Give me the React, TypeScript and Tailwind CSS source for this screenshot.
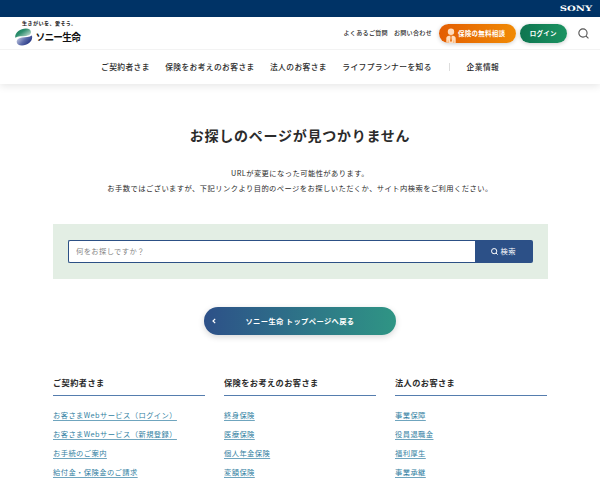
import type { ReactNode } from "react";

const topLinks = ["よくあるご質問", "お問い合わせ"];

const navItems = ["ご契約者さま", "保険をお考えのお客さま", "法人のお客さま", "ライフプランナーを知る"];

const columns = [
  {
    title: "ご契約者さま",
    links: [
      "お客さまWebサービス（ログイン）",
      "お客さまWebサービス（新規登録）",
      "お手続のご案内",
      "給付金・保険金のご請求",
    ],
  },
  {
    title: "保険をお考えのお客さま",
    links: ["終身保険", "医療保険", "個人年金保険", "変額保険"],
  },
  {
    title: "法人のお客さま",
    links: ["事業保障", "役員退職金", "福利厚生", "事業承継"],
  },
];

function SearchIcon({ className }: { className: string }) {
  return (
    <svg viewBox="0 0 12 12" fill="none" stroke="currentColor" className={className}>
      <circle cx="5.4" cy="5.4" r="4.5" />
      <path d="M8.6 8.6 11.4 11.4" />
    </svg>
  );
}

function Logo() {
  return (
    <a href="#" className="block w-[70px] pt-[2px] text-[#111]">
      <p className="ml-[7px] h-[8px] whitespace-nowrap text-[5.1px] font-bold leading-[8px] tracking-[0.39px]">
        生きがいを、愛そう。
      </p>
      <div className="flex items-center">
        <svg viewBox="0 0 18 18" className="mt-[1px] h-[18px] w-[18px] shrink-0">
          <defs>
            <linearGradient id="leaf" x1="0.1" y1="0" x2="0.95" y2="0.7">
              <stop offset="0" stopColor="#0c7a55" />
              <stop offset="0.45" stopColor="#2f8f6f" />
              <stop offset="1" stopColor="#bcd8cd" />
            </linearGradient>
            <linearGradient id="wave" x1="0" y1="0.3" x2="0.9" y2="0.8">
              <stop offset="0" stopColor="#c3cae2" />
              <stop offset="0.5" stopColor="#5d6caa" />
              <stop offset="1" stopColor="#1f3080" />
            </linearGradient>
          </defs>
          <path d="M0.3 9.8C-0.7 5 4.8 0.4 11 0.4c3.4 0 5.3 1.9 5 4.2-.3 2.1-2.3 3.1-5 3.4C7 8.4 3 7.9 0.3 9.8Z" fill="url(#leaf)" />
          <path d="M16.9 7.4c1.6 5-3.8 10.1-9.9 10.1-3.6 0-5.6-1.9-5.3-4.3.3-2.2 2.4-3.4 5.2-3.7 4-.4 7.5-.2 10-2.1Z" fill="url(#wave)" />
        </svg>
        <span className="ml-[2.5px] whitespace-nowrap text-[9.7px] font-bold leading-[16px] tracking-[-0.75px]">
          ソニー生命
        </span>
      </div>
    </a>
  );
}

function PersonIcon() {
  return (
    <svg viewBox="0 0 10 15" className="h-[15px] w-[10px] shrink-0 self-end">
      <circle cx="5" cy="3.8" r="3.2" fill="#ffdcbd" />
      <path d="M0.3 15v-4.4C0.3 8.6 1.6 7.8 3 7.8h4c1.4 0 2.7.8 2.7 2.8V15Z" fill="#ffdcbd" />
      <path d="M4.3 8h1.4L5.4 9.4l.5 3.6-.9 1-.9-1 .5-3.6Z" fill="#e66a05" />
      <path d="M2.2 12.4V15M7.8 12.4V15" stroke="#ec7905" strokeWidth="0.4" />
    </svg>
  );
}

function TextLink({ children }: { children: ReactNode }) {
  return (
    <a
      href="#"
      className="text-[#327fa2] underline decoration-[#327fa2]/70 decoration-[1px] underline-offset-[1.5px]"
    >
      {children}
    </a>
  );
}

export default function App() {
  return (
    <div
      lang="ja"
      className="h-[480px] w-[600px] overflow-hidden bg-white font-['Noto_Sans_CJK_JP',sans-serif] text-[7.3px] tracking-[0.36px] text-[#2b2b2b]"
    >
      <div className="flex h-[17px] items-center justify-end bg-[#003366] pr-[8px]">
        <span className="origin-right scale-x-[1.34] font-['DejaVu_Serif',serif] text-[7.5px] font-bold leading-none tracking-normal text-white">
          SONY
        </span>
      </div>

      <header className="h-[67px] bg-white shadow-[0_2px_8px_rgba(0,0,0,0.1)]">
        <div className="flex h-[33px] justify-between border-b border-[#f3f3f3] pl-[15px] pr-[11px]">
          <Logo />
          <div className="flex items-center">
            <nav className="flex gap-[6px] text-[6.1px] font-medium tracking-[0.25px]">
              {topLinks.map((link) => (
                <a key={link} href="#">
                  {link}
                </a>
              ))}
            </nav>
            <a
              href="#"
              className="ml-[6.5px] flex h-[19px] w-[77px] items-center gap-[2px] overflow-hidden rounded-full bg-linear-to-r from-[#e35d02] to-[#f08a05] pl-[7.5px] text-[6.5px] font-bold tracking-[0.25px] text-white shadow-[0_1px_4px_rgba(0,0,0,0.2)]"
            >
              <PersonIcon />
              <span className="whitespace-nowrap pt-[1px]">保険の無料相談</span>
            </a>
            <a
              href="#"
              className="ml-[4px] flex h-[19px] w-[47.5px] items-center justify-center rounded-full bg-linear-to-r from-[#0e7550] to-[#1b9361] pt-[1px] text-[6.5px] font-bold tracking-[0.25px] text-white shadow-[0_1px_4px_rgba(0,0,0,0.2)]"
            >
              ログイン
            </a>
            <SearchIcon className="ml-[11px] h-[11px] w-[11px] stroke-[1.2] text-[#555]" />
          </div>
        </div>
        <nav className="flex h-[34px] items-center pl-[101px] text-[7.76px] font-medium leading-[12px] tracking-[0.39px]">
          {navItems.map((item) => (
            <a key={item} href="#" className="mr-[15.3px] whitespace-nowrap">
              {item}
            </a>
          ))}
          <span className="ml-[1.5px] h-[8px] w-px bg-[#ddd]" />
          <a href="#" className="ml-[17px] whitespace-nowrap">
            企業情報
          </a>
        </nav>
      </header>

      <main className="px-[53px]">
        <h1 className="pt-[41px] text-center text-[14px] font-bold leading-[20px] tracking-[0.75px]">
          お探しのページが見つかりません
        </h1>
        <p className="mt-[21px] whitespace-nowrap text-center leading-[15px] tracking-[0.42px]">
          URLが変更になった可能性があります。
          <br />
          お手数ではございますが、下記リンクより目的のページをお探しいただくか、サイト内検索をご利用ください。
        </p>

        <form className="mt-[28px] flex h-[55px] w-[494.5px] items-center bg-[#e3eee4] px-[15px]">
          <input
            type="text"
            placeholder="何をお探しですか？"
            className="h-[23px] min-w-0 flex-1 rounded-l-[2px] border border-r-0 border-[#2c5085] bg-white px-[7px] pb-[1px] tracking-[0.36px] placeholder:text-[#858585]"
          />
          <button
            type="button"
            className="flex h-[23px] w-[57.5px] items-center justify-center gap-[3px] rounded-r-[2px] bg-[#2c5087] pr-[1px] tracking-[0.36px] text-white"
          >
            <SearchIcon className="h-[7px] w-[7px] stroke-[1.7]" />
            検索
          </button>
        </form>

        <a
          href="#"
          className="mx-auto mt-[28px] flex h-[28px] w-[192px] items-center rounded-full bg-linear-to-r from-[#2d5088] to-[#2f9584] font-bold text-white shadow-[0_2px_6px_rgba(0,0,0,0.16)]"
        >
          <svg viewBox="0 0 4 6" fill="none" stroke="currentColor" className="ml-[8px] h-[6px] w-[4px]">
            <path d="M3.2 0.8 1 3l2.2 2.2" strokeWidth="1.2" />
          </svg>
          <span className="flex-1 pr-[12px] text-center">ソニー生命 トップページへ戻る</span>
        </a>

        <div className="mt-[41px] grid w-[494px] grid-cols-3 gap-[19px]">
          {columns.map((column) => (
            <section key={column.title}>
              <h2 className="h-[20px] border-b border-[#557dae] text-[8.2px] font-bold leading-[13px] tracking-[0.41px]">
                {column.title}
              </h2>
              <ul className="mt-[10px]">
                {column.links.map((link) => (
                  <li key={link} className="h-[19.1px] whitespace-nowrap leading-[19px] tracking-[0.4px]">
                    <TextLink>{link}</TextLink>
                  </li>
                ))}
              </ul>
            </section>
          ))}
        </div>
      </main>
    </div>
  );
}
